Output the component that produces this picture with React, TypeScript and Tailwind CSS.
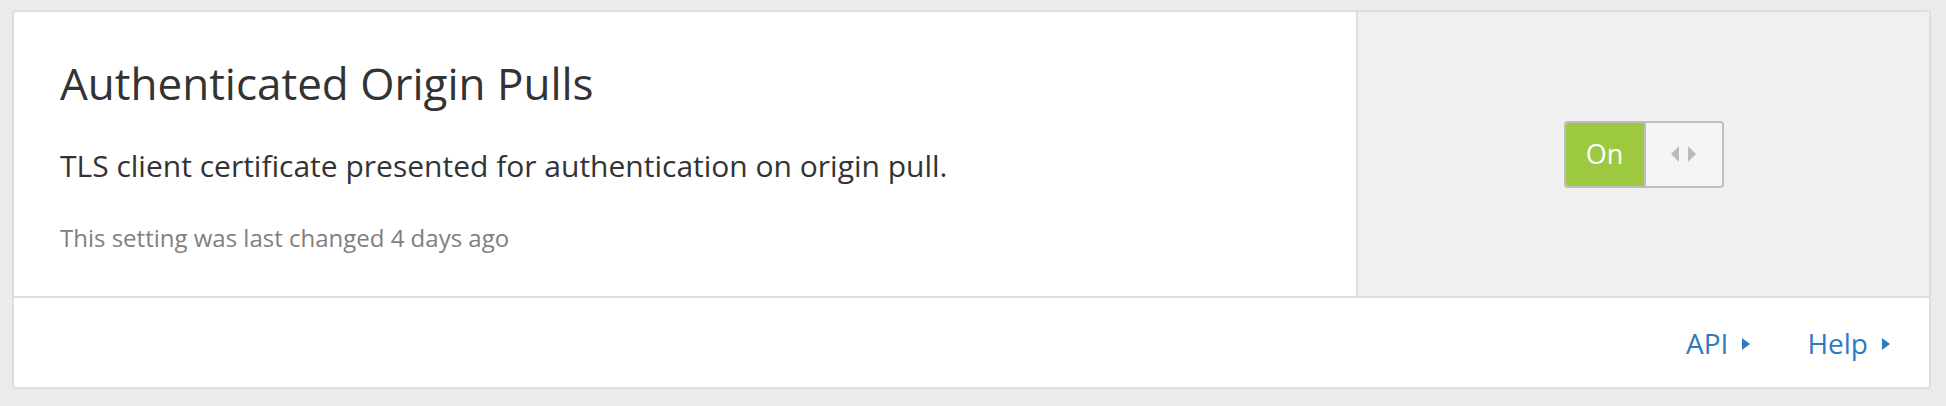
import React from 'react';

const Caret: React.FC = () => (
  <svg width="8" height="12" viewBox="0 0 8 12" className="ml-[14px] mt-[2px]">
    <path d="M0 0 L8 6 L0 12 Z" fill="#2f7bbf" />
  </svg>
);

const Toggle: React.FC = () => (
  <div className="flex h-[67px] w-[160px] overflow-hidden rounded-[4px] border-2 border-[#bdbdbd]">
    <div className="flex w-[78px] items-center justify-center bg-[#9cc93f] text-[27px] text-white">On</div>
    <div className="flex flex-1 items-center justify-center gap-[9px] border-l-2 border-[#bdbdbd] bg-[#f5f5f5]">
      <svg width="8" height="16" viewBox="0 0 8 16">
        <path d="M8 0 L0 8 L8 16 Z" fill="#bbbbbb" />
      </svg>
      <svg width="8" height="16" viewBox="0 0 8 16">
        <path d="M0 0 L8 8 L0 16 Z" fill="#bbbbbb" />
      </svg>
    </div>
  </div>
);

export default function App() {
  return (
    <div
      className="h-[406px] bg-[#ebebeb] pl-[12px] pt-[10px]"
      style={{ fontFamily: '"Open Sans", "Noto Sans", sans-serif' }}
    >
      <div className="w-[1919px] overflow-hidden rounded-[4px] border-2 border-[#dedede] bg-white">
        <div className="flex h-[284px]">
          <div className="flex w-[1342px] flex-col px-[46px] pt-[41px]">
            <h2 className="text-[44px] leading-[60px] text-[#333333]">Authenticated Origin Pulls</h2>
            <p className="mt-[32px] text-[30px] leading-[41px] text-[#333333]">
              TLS client certificate presented for authentication on origin pull.
            </p>
            <p className="mt-[35px] text-[24px] leading-[33px] text-[#808080]">
              This setting was last changed 4 days ago
            </p>
          </div>
          <div className="flex flex-1 items-center justify-center border-l-2 border-[#dedede] bg-[#f0f0f0]">
            <Toggle />
          </div>
        </div>
        <div className="flex h-[91px] items-center justify-end gap-[57px] border-t-2 border-[#dedede] pr-[39px] text-[28px] text-[#2f7bbf]">
          <a className="flex items-center">
            API
            <Caret />
          </a>
          <a className="flex items-center">
            Help
            <Caret />
          </a>
        </div>
      </div>
    </div>
  );
}
